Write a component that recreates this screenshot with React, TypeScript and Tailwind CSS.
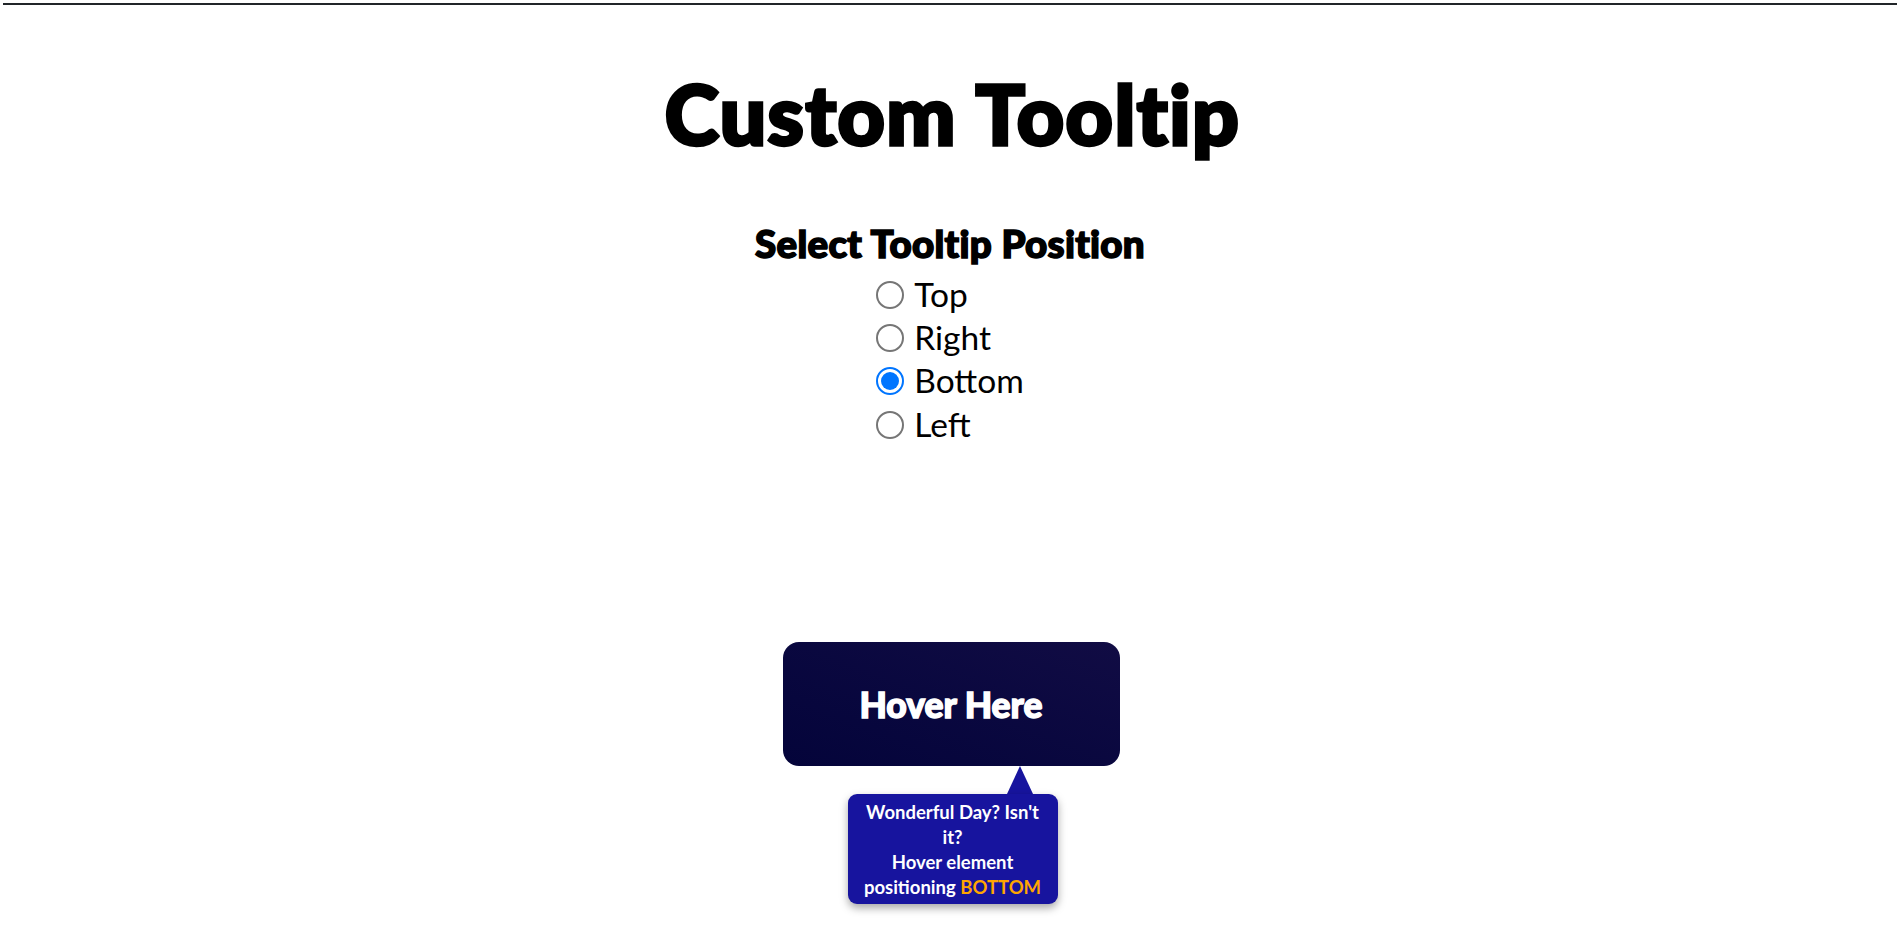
import React, { useState } from "react";

const positions = ["Top", "Right", "Bottom", "Left"];

export default function App() {
  const [pos, setPos] = useState("Bottom");
  return (
    <div className="min-h-[926px] w-full bg-white text-black" style={{ fontFamily: "Lato, 'Open Sans', sans-serif" }}>
      <div className="mx-[3px] pt-[3px]">
        <div className="h-[2px] bg-[#212529]" />
      </div>
      <div className="flex flex-col items-center">
        <h1 className="mt-[67px] pl-[5px] text-[82px] font-black leading-none tracking-[1.5px] [-webkit-text-stroke:3.4px_#000]">Custom Tooltip</h1>
        <h2 className="mt-[67px] text-[38.5px] font-black leading-[44px] tracking-[0.3px] [-webkit-text-stroke:1.6px_#000]">Select Tooltip Position</h2>
        <div className="mt-[8px] flex flex-col items-start">
          {positions.map((p) => (
            <label key={p} className="flex h-[43.3px] items-center gap-[10px] text-[33.5px] leading-none">
              <span
                className={
                  p === pos
                    ? "flex h-[28px] w-[28px] items-center justify-center rounded-full border-[2px] border-[#0075ff] bg-white"
                    : "flex h-[28px] w-[28px] items-center justify-center rounded-full border-[2px] border-[#767676] bg-white"
                }
                onClick={() => setPos(p)}
              >
                {p === pos && <span className="h-[18px] w-[18px] rounded-full bg-[#0075ff]" />}
              </span>
              <span>{p}</span>
            </label>
          ))}
        </div>
        <div className="relative mt-[196px] ml-[2px]">
          <button className="flex h-[124px] w-[337px] items-center justify-center rounded-[16px] bg-gradient-to-tr from-[#04043a] to-[#110c44] text-[35.5px] font-black text-white [-webkit-text-stroke:1.4px_#fff]">
            Hover Here
          </button>
          <div className="absolute left-[65px] top-[124px] flex flex-col items-center">
            <div className="ml-[134px] h-0 w-0 border-x-[13px] border-b-[28px] border-x-transparent border-b-[#17149e]" />
            <div className="w-[210px] rounded-[9px] bg-[#17149e] px-[6px] pb-[4px] pt-[6px] text-center text-[18.5px] font-bold leading-[25px] text-white shadow-[0_4px_8px_rgba(0,0,0,0.35)]">
              <div className="whitespace-nowrap">Wonderful Day? Isn't</div>
              <div className="whitespace-nowrap">it?</div>
              <div className="whitespace-nowrap">Hover element</div>
              <div className="whitespace-nowrap">
                positioning <span className="text-[#ffa500]">BOTTOM</span>
              </div>
            </div>
          </div>
        </div>
      </div>
    </div>
  );
}
